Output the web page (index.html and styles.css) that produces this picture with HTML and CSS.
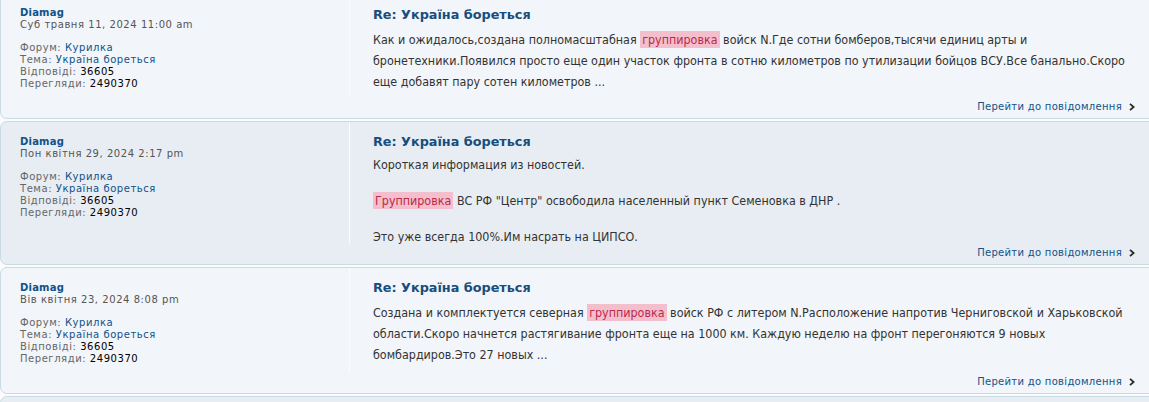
FILE: index.html
```html
<!DOCTYPE html>
<html lang="uk">
<head>
    <meta charset="UTF-8">
    <title>Пошук: группировка</title>
    <link rel="stylesheet" href="styles.css">
</head>
<body>
    <!-- Search results -->
    <div class="results">
        <!-- Result 1 -->
        <div class="search post bg1">
            <div class="post-inner">
                <dl class="postprofile">
                    <dt><a class="author" href="#">Diamag</a></dt>
                    <dd class="date">Суб травня 11, 2024 11:00 am</dd>
                    <dd class="gap">Форум: <a href="#">Курилка</a></dd>
                    <dd>Тема: <a href="#">Україна бореться</a></dd>
                    <dd>Відповіді: <strong>36605</strong></dd>
                    <dd>Перегляди: <strong>2490370</strong></dd>
                </dl>
                <div class="postbody">
                    <h3><a href="#">Re: Україна бореться</a></h3>
                    <div class="content">Как и ожидалось,создана полномасштабная <span class="posthilit">группировка</span> войск N.Где сотни бомберов,тысячи единиц арты и<br>бронетехники.Появился просто еще один участок фронта в сотню километров по утилизации бойцов ВСУ.Все банально.Скоро<br>еще добавят пару сотен километров ...</div>
                </div>
            </div>
            <div class="jump">
                <a href="#">Перейти до повідомлення</a>
                <svg class="arrow" width="6" height="8" viewBox="0 0 6 8"><polyline points="1,0.8 4.6,4 1,7.2" fill="none" stroke="#2b2b2b" stroke-width="1.8"/></svg>
            </div>
        </div>

        <!-- Result 2 -->
        <div class="search post bg2">
            <div class="post-inner">
                <dl class="postprofile">
                    <dt><a class="author" href="#">Diamag</a></dt>
                    <dd class="date">Пон квітня 29, 2024 2:17 pm</dd>
                    <dd class="gap">Форум: <a href="#">Курилка</a></dd>
                    <dd>Тема: <a href="#">Україна бореться</a></dd>
                    <dd>Відповіді: <strong>36605</strong></dd>
                    <dd>Перегляди: <strong>2490370</strong></dd>
                </dl>
                <div class="postbody">
                    <h3><a href="#">Re: Україна бореться</a></h3>
                    <div class="content short">Короткая информация из новостей.<br><br><span class="posthilit">Группировка</span> ВС РФ "Центр" освободила населенный пункт Семеновка в ДНР .<br><br>Это уже всегда 100%.Им насрать на ЦИПСО.</div>
                </div>
            </div>
            <div class="jump">
                <a href="#">Перейти до повідомлення</a>
                <svg class="arrow" width="6" height="8" viewBox="0 0 6 8"><polyline points="1,0.8 4.6,4 1,7.2" fill="none" stroke="#2b2b2b" stroke-width="1.8"/></svg>
            </div>
        </div>

        <!-- Result 3 -->
        <div class="search post bg1">
            <div class="post-inner">
                <dl class="postprofile">
                    <dt><a class="author" href="#">Diamag</a></dt>
                    <dd class="date">Вів квітня 23, 2024 8:08 pm</dd>
                    <dd class="gap">Форум: <a href="#">Курилка</a></dd>
                    <dd>Тема: <a href="#">Україна бореться</a></dd>
                    <dd>Відповіді: <strong>36605</strong></dd>
                    <dd>Перегляди: <strong>2490370</strong></dd>
                </dl>
                <div class="postbody">
                    <h3><a href="#">Re: Україна бореться</a></h3>
                    <div class="content">Создана и комплектуется северная <span class="posthilit">группировка</span> войск РФ с литером N.Расположение напротив Черниговской и Харьковской<br>области.Скоро начнется растягивание фронта еще на 1000 км. Каждую неделю на фронт перегоняются 9 новых<br>бомбардиров.Это 27 новых ...</div>
                </div>
            </div>
            <div class="jump">
                <a href="#">Перейти до повідомлення</a>
                <svg class="arrow" width="6" height="8" viewBox="0 0 6 8"><polyline points="1,0.8 4.6,4 1,7.2" fill="none" stroke="#2b2b2b" stroke-width="1.8"/></svg>
            </div>
        </div>

        <!-- Result 4 (cut off by the window) -->
        <div class="search post bg2 last"></div>
    </div>
</body>
</html>
```

FILE: styles.css
```css
/* Reset and Base Styles */
* {
    margin: 0;
    padding: 0;
    box-sizing: border-box;
}

body {
    font-family: "DejaVu Sans", Verdana, sans-serif;
    font-size: 10px;
    color: #536482;
    background: #fafbfc;
    overflow: hidden;
}

a {
    color: #105289;
    text-decoration: none;
}

/* Results list */
.results {
    margin-top: -8px;
    margin-right: -10px;
}

.post {
    border: 1px solid #c9dbe3;
    border-radius: 7px;
    margin-bottom: 2px;
    padding: 0 23px 5px 19px;
}

.post.last {
    height: 40px;
}

.bg1 {
    background: #f2f5f9;
}

.bg2 {
    background: #e7edf3;
}

.post-inner {
    display: flex;
}

/* Left column: author and topic info */
.postprofile {
    width: 330px;
    padding: 14px 0 8px;
    border-right: 1px solid #fbfcfd;
    line-height: 12px;
    letter-spacing: 0.55px;
    color: #666;
}

.postprofile .author {
    font-weight: bold;
    letter-spacing: 0.2px;
    color: #105289;
}

.postprofile .date {
    color: #555;
}

.postprofile .gap {
    margin-top: 11px;
}

.postprofile strong {
    font-weight: normal;
    color: #000;
}

/* Right column: post text */
.postbody {
    flex: 1;
    padding: 11px 0 0 23px;
    color: #333;
}

.post:first-child .postbody {
    padding-top: 13px;
}

.postbody h3 {
    font-size: 12.8px;
    line-height: 18px;
    font-weight: bold;
}

.postbody h3 a {
    color: #174d7c;
}

.content {
    font-family: "DejaVu Sans Condensed", "DejaVu Sans", sans-serif;
    font-size: 12.4px;
    line-height: 21px;
    margin-top: 5px;
}

.content.short {
    line-height: 18px;
    margin-bottom: -2px;
}

.posthilit {
    background: #f3bfcc;
    color: #bc2a4d;
    padding: 1px 2px;
}

/* Jump link */
.jump {
    display: flex;
    justify-content: flex-end;
    align-items: center;
    gap: 7px;
    height: 13px;
    margin-top: 2px;
    letter-spacing: 0.3px;
}

.jump a {
    color: #105289;
}
```
